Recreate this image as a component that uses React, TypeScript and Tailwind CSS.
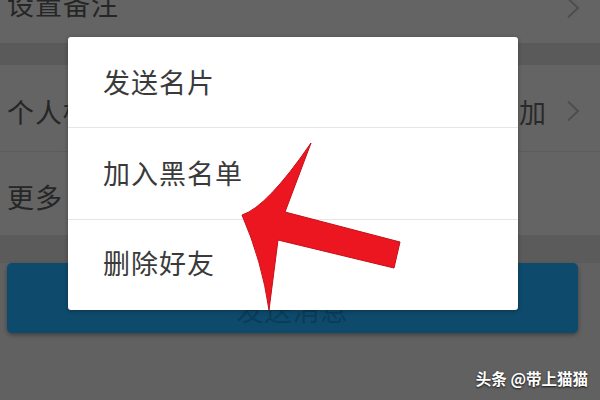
import React from "react";

const font = { fontFamily: '"Noto Sans CJK SC", "Noto Sans", sans-serif' };

function Chevron() {
  return (
    <svg width="14" height="22" viewBox="0 0 14 22" className="shrink-0">
      <path d="M2 1.5 L12 11 L2 20.5" fill="none" stroke="#4e4e4e" strokeWidth="2" />
    </svg>
  );
}

export default function App() {
  return (
    <div
      className="relative w-[600px] h-[400px] overflow-hidden bg-[#616161]"
      style={font}
    >
      {/* underlying page (dimmed) */}
      <div className="flex flex-col">
        <div className="h-[43px] bg-[#646464] flex items-end justify-between pl-[7px] pr-[20px] pb-[26px]">
          <span className="text-[27px] leading-none text-[#262626] tracking-[1px]">设置备注</span>
          <div className="mb-[-2px]">
            <Chevron />
          </div>
        </div>
        <div className="h-[22px] bg-[#5a5a5a]" />
        <div className="h-[87px] bg-[#646464] flex items-center justify-between pl-[7px] pr-[20px] pt-[6px] border-b border-[#5c5c5c]">
          <span className="text-[27px] leading-none text-[#262626] tracking-[1px]">个人标签</span>
          <div className="flex items-center gap-[19px]">
            <span className="text-[27px] leading-none text-[#2a2a2a] tracking-[1px]">添加</span>
            <Chevron />
          </div>
        </div>
        <div className="h-[83px] bg-[#646464] flex items-center pl-[7px] pt-[6px]">
          <span className="text-[27px] leading-none text-[#262626] tracking-[1px]">更多</span>
        </div>
        <div className="h-[28px] bg-[#5b5b5b]" />
        <div className="mx-[7px] mr-[22px] h-[70px] rounded-[5px] bg-[#0e4a6b] shadow-[0_2px_4px_rgba(0,0,0,0.35)] flex items-center justify-center pt-[22px]">
          <span className="text-[27px] leading-none text-[#0b3c58] tracking-[1px]">发送消息</span>
        </div>
      </div>

      {/* dialog */}
      <div className="absolute left-[68px] top-[37px] w-[450px] h-[273px] bg-white rounded-[3px] shadow-[0_1px_4px_rgba(0,0,0,0.3)] flex flex-col">
        <div className="flex-1 flex items-center pl-[35px] border-b border-[#e6e6e6]">
          <span className="text-[27px] leading-none text-[#3a3a3a] tracking-[1px] -mt-[1px]">发送名片</span>
        </div>
        <div className="flex-1 flex items-center pl-[35px] border-b border-[#e6e6e6]">
          <span className="text-[27px] leading-none text-[#3a3a3a] tracking-[1px] -mt-[1px]">加入黑名单</span>
        </div>
        <div className="flex-1 flex items-center pl-[35px]">
          <span className="text-[27px] leading-none text-[#3a3a3a] tracking-[1px] -mt-[4px]">删除好友</span>
        </div>
      </div>

      {/* red arrow annotation */}
      <svg className="absolute inset-0" width="600" height="400" viewBox="0 0 600 400">
        <path
          d="M242,215 Q267,207 311,143 L285,212 L400,242 L394,268 L278,240 L269,310 Q262,261 242,215 Z"
          fill="#ec1620"
          stroke="#c40f18"
          strokeWidth="1"
          strokeLinejoin="miter"
        />
      </svg>

      {/* watermark */}
      <div className="absolute right-[12px] top-[371px] text-[15.5px] leading-none text-white font-bold [text-shadow:0_1px_2px_rgba(0,0,0,0.8)] whitespace-nowrap">
        头条 @带上猫猫
      </div>
    </div>
  );
}
